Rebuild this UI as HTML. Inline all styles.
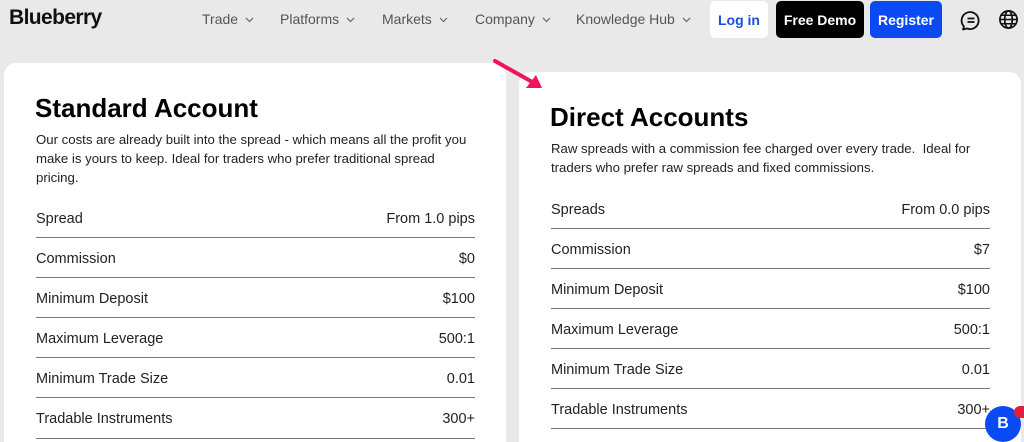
<!DOCTYPE html>
<html><head><meta charset="utf-8"><style>
*{margin:0;padding:0;box-sizing:border-box}
html,body{width:1024px;height:442px;overflow:hidden}
body{background:#e8e9e8;font-family:"Liberation Sans",sans-serif;position:relative;color:#111}
.abs{position:absolute;white-space:nowrap}
.nav{font-size:14px;color:#555;top:11px}
.nav svg{margin-left:7px;vertical-align:middle}
.btn{position:absolute;top:1px;height:37px;border-radius:5px;font-size:14px;font-weight:bold;display:flex;align-items:center;justify-content:center}
.card{position:absolute;background:#fff;border-radius:12px 12px 0 0}
h2{position:absolute;font-size:26px;font-weight:bold;color:#000;white-space:nowrap}
.desc{position:absolute;font-size:13.2px;line-height:19px;color:#222;white-space:nowrap}
.row{position:absolute;height:40px;border-bottom:1.5px solid #777;font-size:14.5px;display:flex;justify-content:space-between;align-items:center;padding-top:2px;color:#222}
</style></head><body>
<div class="abs" style="left:9px;top:6px;font-size:21px;font-weight:bold;letter-spacing:-0.6px;color:#111">Blueberry</div>
<div class="abs nav" style="left:202px">Trade<svg width="9" height="6"><path d="M1 1l3.5 3.5L8 1" stroke="#666" fill="none" stroke-width="1.2"/></svg></div>
<div class="abs nav" style="left:280px">Platforms<svg width="9" height="6"><path d="M1 1l3.5 3.5L8 1" stroke="#666" fill="none" stroke-width="1.2"/></svg></div>
<div class="abs nav" style="left:382px">Markets<svg width="9" height="6"><path d="M1 1l3.5 3.5L8 1" stroke="#666" fill="none" stroke-width="1.2"/></svg></div>
<div class="abs nav" style="left:475px">Company<svg width="9" height="6"><path d="M1 1l3.5 3.5L8 1" stroke="#666" fill="none" stroke-width="1.2"/></svg></div>
<div class="abs nav" style="left:576px">Knowledge Hub<svg width="9" height="6"><path d="M1 1l3.5 3.5L8 1" stroke="#666" fill="none" stroke-width="1.2"/></svg></div>
<div class="btn" style="left:710px;width:58px;background:#fff;color:#1a4fe0">Log in</div>
<div class="btn" style="left:776px;width:88px;background:#000;color:#fff">Free Demo</div>
<div class="btn" style="left:870px;width:72px;background:#0a4af5;color:#fff">Register</div>
<svg class="abs" style="left:960px;top:9px" width="22" height="22" viewBox="0 0 22 22"><path d="M4 17.5A8.5 8.5 0 1 1 7 19.5L3 20.5Z" fill="none" stroke="#111" stroke-width="1.8" stroke-linejoin="round"/><path d="M7.5 9.5h7M7.5 13h7" stroke="#111" stroke-width="1.8"/></svg>
<svg class="abs" style="left:998px;top:9px" width="21" height="21" viewBox="0 0 22 22"><circle cx="11" cy="11" r="9" fill="none" stroke="#111" stroke-width="1.8"/><ellipse cx="11" cy="11" rx="4" ry="9" fill="none" stroke="#111" stroke-width="1.8"/><path d="M2 11h18M3.5 6.5h15M3.5 15.5h15" stroke="#111" stroke-width="1.6"/></svg>

<div class="card" style="left:4px;top:63px;width:502px;height:379px"></div>
<div class="card" style="left:519px;top:72px;width:502px;height:370px"></div>

<svg class="abs" style="left:490px;top:55px" width="60" height="40"><path d="M5 6L44 28" stroke="#f0145a" stroke-width="4" stroke-linecap="round"/><path d="M52 33L36 33L46 20Z" fill="#f0145a"/></svg>

<h2 style="left:35px;top:93px">Standard Account</h2>
<div class="desc" style="left:36px;top:130px">Our costs are already built into the spread - which means all the profit you<br>make is yours to keep. Ideal for traders who prefer traditional spread<br>pricing.</div>
<div class="row" style="left:36px;top:198px;width:439px"><span>Spread</span><span>From 1.0 pips</span></div>
<div class="row" style="left:36px;top:238px;width:439px"><span>Commission</span><span>$0</span></div>
<div class="row" style="left:36px;top:278px;width:439px"><span>Minimum Deposit</span><span>$100</span></div>
<div class="row" style="left:36px;top:318px;width:439px"><span>Maximum Leverage</span><span>500:1</span></div>
<div class="row" style="left:36px;top:358px;width:439px"><span>Minimum Trade Size</span><span>0.01</span></div>
<div class="row" style="left:36px;top:398px;width:439px;height:41px"><span>Tradable Instruments</span><span>300+</span></div>

<h2 style="left:550px;top:102px">Direct Accounts</h2>
<div class="desc" style="left:551px;top:139px">Raw spreads with a commission fee charged over every trade.&nbsp; Ideal for<br>traders who prefer raw spreads and fixed commissions.</div>
<div class="row" style="left:551px;top:189px;width:439px"><span>Spreads</span><span>From 0.0 pips</span></div>
<div class="row" style="left:551px;top:229px;width:439px"><span>Commission</span><span>$7</span></div>
<div class="row" style="left:551px;top:269px;width:439px"><span>Minimum Deposit</span><span>$100</span></div>
<div class="row" style="left:551px;top:309px;width:439px"><span>Maximum Leverage</span><span>500:1</span></div>
<div class="row" style="left:551px;top:349px;width:439px"><span>Minimum Trade Size</span><span>0.01</span></div>
<div class="row" style="left:551px;top:389px;width:439px"><span>Tradable Instruments</span><span>300+</span></div>

<div class="abs" style="left:985px;top:406px;width:36px;height:36px;border-radius:50%;background:#0a4af5;color:#fff;font-weight:bold;font-size:16px;display:flex;align-items:center;justify-content:center">B</div>
<div class="abs" style="left:1014px;top:406px;width:10px;height:12px;border-radius:6px 0 0 6px;background:#e0203a"></div>
</body></html>
